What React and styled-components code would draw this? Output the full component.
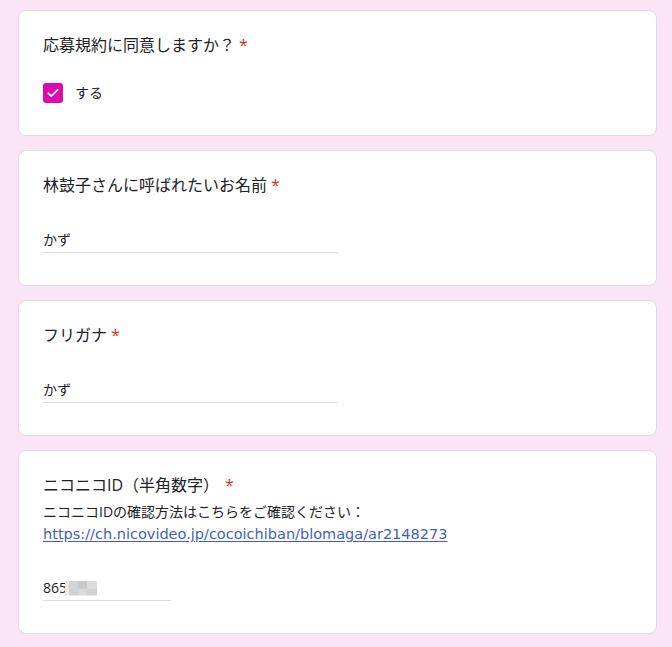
import React from 'react';
import styled, { createGlobalStyle } from "styled-components"

//global
const Global = createGlobalStyle`
  html, body {
    margin: 0;
    padding: 0;
    background: #fbe4f5;
  }
  body {
    font-family: "Open Sans", "Noto Sans CJK JP", sans-serif;
    color: #202124;
  }
`

const Page = styled.main`
  display: flex;
  flex-direction: column;
  gap: 14px;
  padding: 10px 15px 14px 18px;
`

const Card = styled.section`
  background: #fff;
  border: 1px solid #dadce0;
  border-radius: 8px;
  padding: 22px 24px 32px;
  display: flex;
  flex-direction: column;
`

const Title = styled.div`
  font-size: 16px;
  line-height: 24px;
  span{
    color: #d93025;
    margin-left: ${p => p.$starGap || "4px"};
  }
`

const Desc = styled.div`
  font-size: 14px;
  line-height: 22px;
  margin-top: 4px;
  a{
    font-family: "DejaVu Sans", "Noto Sans CJK JP", sans-serif;
    font-size: 14.5px;
    color: #3f5fbf;
    text-decoration: underline;
    text-underline-offset: 2px;
  }
`

const CheckRow = styled.label`
  display: flex;
  align-items: center;
  gap: 12px;
  margin-top: 26px;
  font-size: 14px;
  line-height: 20px;
`

const Box = styled.span`
  width: 20px;
  height: 20px;
  border-radius: 3px;
  background: #db0aad;
  display: flex;
  align-items: center;
  justify-content: center;
  svg{
    width: 14px;
    height: 14px;
  }
`

const Field = styled.div`
  width: ${p => p.$w}px;
  margin-top: ${p => p.$top}px;
  border-bottom: 1px solid #dadce0;
  font-size: 14px;
  line-height: 20px;
  padding-bottom: 2px;
  display: flex;
  align-items: center;
`

// pixelated mosaic for the hidden digits
const Mosaic = styled.span`
  display: inline-block;
  width: 32px;
  height: 15px;
  margin-left: -2px;
  background:
    linear-gradient(90deg, #ececec 0 12%, #d4d4d4 12% 40%, #c9c9c9 40% 70%, #dcdcdc 70%) top / 100% 50% no-repeat,
    linear-gradient(90deg, #eeeeee 0 12%, #d0d0d0 12% 40%, #dadada 40% 70%, #d3d3d3 70%) bottom / 100% 50% no-repeat;
`

const App = () => {
  return (
    <>
      <Global />
      <Page>
        <Card>
          <Title>応募規約に同意しますか？<span>*</span></Title>
          <CheckRow>
            <Box>
              <svg viewBox="0 0 24 24" fill="none" stroke="#fff" strokeWidth="3" strokeLinecap="round" strokeLinejoin="round">
                <path d="M4 12.5l5 5L20 6.5" />
              </svg>
            </Box>
            する
          </CheckRow>
        </Card>

        <Card>
          <Title>林鼓子さんに呼ばれたいお名前<span>*</span></Title>
          <Field $w={295} $top={33}>かず</Field>
        </Card>

        <Card>
          <Title>フリガナ<span>*</span></Title>
          <Field $w={295} $top={33}>かず</Field>
        </Card>

        <Card>
          <Title $starGap="6px">ニコニコID（半角数字）<span>*</span></Title>
          <Desc>
            ニコニコIDの確認方法はこちらをご確認ください：<br />
            <a href="#">https://ch.nicovideo.jp/cocoichiban/blomaga/ar2148273</a>
          </Desc>
          <Field $w={128} $top={33}>865<Mosaic /></Field>
        </Card>
      </Page>
    </>
  );
}

export default App;
